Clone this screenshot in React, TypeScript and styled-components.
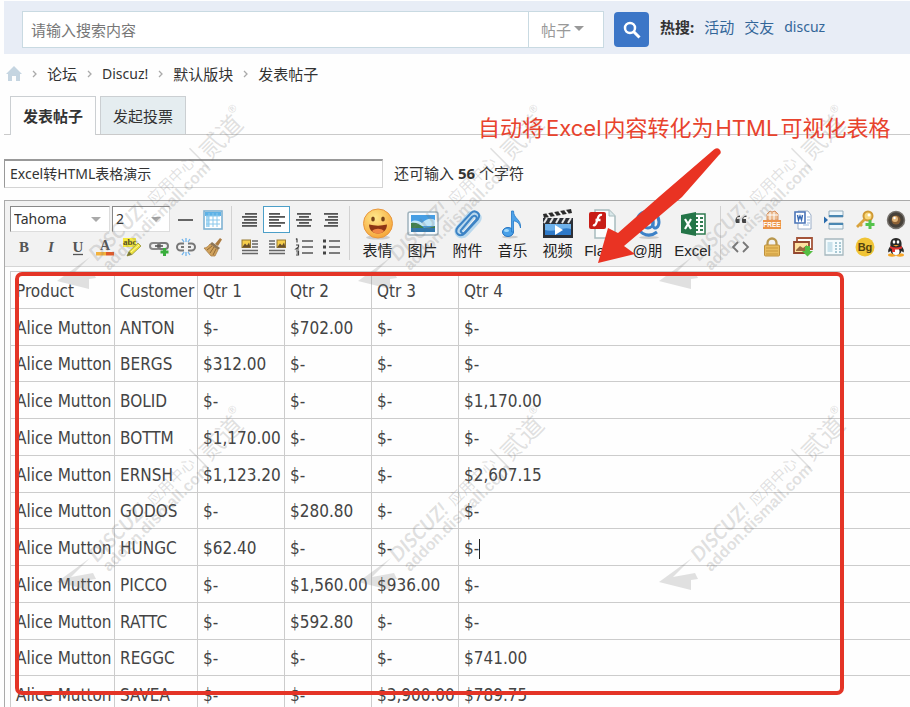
import React from "react";
import styled, { createGlobalStyle, css } from "styled-components";

const uiFont = `"Noto Sans", "Noto Sans CJK SC", sans-serif`;
const tahomaLike = `Tahoma, "DejaVu Sans Condensed", "Noto Sans CJK SC", sans-serif`;

const GlobalStyle = createGlobalStyle`
  *, *::before, *::after { box-sizing: border-box; }
  body { margin: 0; background: #fefefe; color: #333; font: 15px/20px ${uiFont}; }
  button, input, select { font: inherit; color: inherit; margin: 0; }
`;

const Page = styled.div`
  position: relative;
  display: flex;
  flex-direction: column;
  height: 100vh;
  padding: 1px 0 0 4px;
  overflow: hidden;
`;

/* ---------- search header ---------- */
const Header = styled.header`
  display: flex;
  align-items: flex-start;
  flex: none;
  height: 53px;
  padding: 10px 18px;
  background: #e8edf6;
`;
const SearchForm = styled.form`
  display: flex;
  flex: 0 1 627px;
  align-items: center;
`;
const SearchInput = styled.input`
  flex: 1;
  min-width: 0;
  height: 37px;
  padding: 0 8px;
  border: 1px solid #c9dae2;
  background: #fff;
  outline: 0;
  &::placeholder { color: #777; opacity: 1; }
`;
const ScopeWrap = styled.div`
  position: relative;
  width: 76px;
  height: 37px;
  margin: 0 10px 0 -1px;
`;
const ScopeSelect = styled.select`
  width: 100%;
  height: 100%;
  padding: 0 12px;
  border: 1px solid #c9dae2;
  border-radius: 0;
  background: #fff;
  color: #999;
  appearance: none;
`;
const ScopeArrow = styled.svg`
  position: absolute;
  right: 20px;
  top: 15px;
  pointer-events: none;
`;
const SearchButton = styled.button`
  display: flex;
  align-items: center;
  justify-content: center;
  width: 35px;
  height: 35px;
  padding: 0;
  border: 0;
  border-radius: 4px;
  background: #3c76c7;
`;
const HotLinks = styled.nav`
  display: flex;
  gap: 10px;
  margin: 6px 0 0 11px;
  white-space: nowrap;
`;
const HotLink = styled.a<{ $latin?: boolean }>`
  color: #336699;
  font-size: ${(p) => (p.$latin ? 14 : 15)}px;
  text-decoration: none;
`;

/* ---------- breadcrumb, tabs, title ---------- */
const Crumbs = styled.nav`
  display: flex;
  align-items: center;
  gap: 8px;
  flex: none;
  height: 42px;
  padding: 0 0 2px 2px;
`;
const CrumbLink = styled.a<{ $latin?: boolean }>`
  display: flex;
  color: #333;
  font-size: ${(p) => (p.$latin ? 14 : 15)}px;
  text-decoration: none;
`;
const Tabs = styled.div`
  display: flex;
  gap: 4px;
  flex: none;
  height: 39px;
  padding-left: 6px;
  border-bottom: 1px solid #cacaca;
`;
const Tab = styled.button<{ $active?: boolean }>`
  width: 86px;
  height: ${(p) => (p.$active ? 39 : 38)}px;
  padding: 0;
  border: 1px solid #cbcfd2;
  border-bottom: 0;
  background: ${(p) => (p.$active ? "#fefefe" : "#e5edf0")};
  font-weight: ${(p) => (p.$active ? 700 : 400)};
`;
const TitleRow = styled.div`
  display: flex;
  align-items: center;
  gap: 11px;
  flex: none;
  margin: 24px 0 12px;
`;
const TitleInput = styled.input`
  width: 379px;
  height: 29px;
  padding: 0 5px 3px;
  border: 1px solid #d4d4d4;
  border-top: 2px solid #999;
  border-left-color: #999;
  background: #fff;
  font-size: 14px;
  outline: 0;
`;
const Counter = styled.span`
  padding-bottom: 2px;
`;

/* ---------- editor ---------- */
const Editor = styled.section`
  display: flex;
  flex-direction: column;
  flex: 1;
  min-height: 0;
  border: 1px solid #aaa;
  border-width: 1px 0 0 1px;
`;
const Toolbar = styled.div`
  display: flex;
  flex: none;
  height: 66px;
  padding: 5px 0 0 5px;
  border-bottom: 1px solid #d5d5d5;
  background: #f2f2f2;
`;
const Group = styled.div<{ $cell: number; $columns: number }>`
  display: grid;
  grid-template-columns: repeat(${(p) => p.$columns}, ${(p) => p.$cell}px);
  grid-template-rows: 27px 27px;
`;
const Divider = styled.div`
  width: 1px;
  height: 54px;
  margin: 0 4px 0 5px;
  flex: none;
  background: #d2d2d2;
`;
const FontRow = styled.div`
  display: flex;
  gap: 2px;
  grid-column: span 6;
`;
const FontBox = styled.div<{ $width: number }>`
  position: relative;
  width: ${(p) => p.$width}px;
  height: 26px;
`;
const FontSelect = styled.select`
  width: 100%;
  height: 100%;
  padding: 0 3px;
  border: 1px solid #ddd;
  border-top-color: #888;
  border-left-color: #888;
  border-radius: 0;
  background: #fff;
  font-size: 14px;
  appearance: none;
`;
const FontArrow = styled.svg`
  position: absolute;
  right: 9px;
  top: 11px;
  pointer-events: none;
`;
const IconButton = styled.button<{ $active?: boolean }>`
  display: flex;
  align-items: center;
  justify-content: center;
  height: 27px;
  padding: 0;
  border: 1px solid transparent;
  background: none;
  ${(p) => p.$active && css`border-color: #4c9fc8; background: #fff;`}
`;
const BigButtons = styled.div`
  display: flex;
  padding-left: 1px;
`;
const BigButton = styled.button`
  display: flex;
  flex-direction: column;
  align-items: center;
  width: 45px;
  height: 56px;
  padding: 2px 0 0;
  border: 0;
  background: none;
  white-space: nowrap;
  line-height: 22px;
  color: #222;
  font-family: "Liberation Sans", "Noto Sans CJK SC", sans-serif;
`;
const Content = styled.div`
  flex: 1;
  min-height: 0;
  padding: 4px 0 0 5px;
  background: #fefefe;
  overflow: hidden;
`;
const DataTable = styled.table`
  width: calc(100% + 1px);
  height: 442px;
  border-collapse: collapse;
  table-layout: fixed;
  color: #444;
  font: 17px/24px ${tahomaLike};
`;
const Col = styled.col<{ $width?: number }>`
  ${(p) => p.$width && css`width: ${p.$width}px;`}
`;
const cell = css`
  padding: 2px 5px 0;
  border: 1px solid #ccc;
  font-weight: 400;
  text-align: left;
  white-space: nowrap;
`;
const Th = styled.th`${cell}`;
const Td = styled.td`${cell}`;
const Caret = styled.span`
  display: inline-block;
  width: 1px;
  height: 20px;
  background: #222;
  vertical-align: middle;
`;

/* ---------- annotations over the page ---------- */
const Overlay = styled.svg`
  position: absolute;
  left: 0;
  top: 0;
  pointer-events: none;
`;
const Highlight = styled.div`
  position: absolute;
  left: 15px;
  top: 272px;
  width: 829px;
  height: 423px;
  border: 4px solid #e43426;
  border-radius: 7px;
  pointer-events: none;
`;
const Note = styled.p`
  position: absolute;
  left: 478px;
  top: 112px;
  margin: 0;
  color: #e8432d;
  font: 22px/32px Inter, "Noto Sans CJK SC", sans-serif;
  white-space: nowrap;
`;
const NoteLatin = styled.span`
  margin: 0 2px;
`;

/* ---------- icons ---------- */
const Svg = ({ s = 20, children }: { s?: number; children: React.ReactNode }) => (
  <svg width={s} height={s} viewBox={`0 0 ${s} ${s}`} fill="none" aria-hidden="true">{children}</svg>
);

const Lines = ({ rows }: { rows: [number, number][] }) => (
  <Svg>
    {rows.map(([x, w], i) => (
      <rect key={i} x={x} y={3 + i * 3} width={w} height="1.8" fill="#555" />
    ))}
  </Svg>
);

const Letter = ({ t, i, u }: { t: string; i?: boolean; u?: boolean }) => (
  <Svg>
    <text x="10" y="15" textAnchor="middle" fontFamily="Liberation Serif, serif" fontSize="15" fontWeight="700"
      fontStyle={i ? "italic" : "normal"} fill="#555">{t}</text>
    {u && <path d="M5 17.500h10" stroke="#555" strokeWidth="1.300" />}
  </Svg>
);

const FloatIcon = ({ right }: { right?: boolean }) => {
  const px = right ? 10 : 2;
  const lx = right ? 2 : 12;
  return (
    <Svg>
      <path d={`M${lx} 4h6M${lx} 7h6M${lx} 10h6M2 13.500h16M2 16.500h16`} stroke="#666" strokeWidth="1.600" />
      <rect x={px} y="3" width="8.500" height="7.500" fill="#f7cf4c" stroke="#987a31" />
      <path d={`M${px} 10.500l3-4 2 2 2-3 1.500 5z`} fill="#68502d" />
    </Svg>
  );
};

const ListIcon = ({ ordered }: { ordered?: boolean }) => (
  <Svg>
    <path d="M8 4h11M8 10h11M8 16h11" stroke="#555" strokeWidth="1.500" />
    {ordered ? (
      <path d="M3 1.500v4M2 2.500l1-1M2 8h2.500v2L2 12h3M2 14h2.500v4H2M2.500 16h2" stroke="#444" strokeWidth="1.200" />
    ) : (
      <path d="M2 2.500h3v3H2zM2 8.500h3v3H2zM2 14.500h3v3H2z" fill="#444" />
    )}
  </Svg>
);

const fontIcons: [string, React.ReactNode][] = [
  ["分隔线", <Svg key="0"><path d="M2 10h15" stroke="#555" strokeWidth="1.800" /></Svg>],
  ["表格", (
    <Svg key="1">
      <rect x="1" y="1" width="18" height="18" fill="#fff" stroke="#7fb2d3" strokeWidth="1.600" />
      <path d="M2 2h16v4H2z" fill="#5eb2e6" />
      <path d="M3 6h3v11H3z" fill="#a9d9f4" />
      <path d="M6 3v14M10 3v14M14 3v14M3 6h14M3 10h14M3 14h14" stroke="#8ac8ec" />
    </Svg>
  )],
  ["粗体", <Letter key="2" t="B" />],
  ["斜体", <Letter key="3" t="I" i />],
  ["下划线", <Letter key="4" t="U" u />],
  ["文字颜色", (
    <Svg key="5">
      <text x="10" y="13" textAnchor="middle" fontFamily="Liberation Serif, serif" fontSize="14" fontWeight="700" fill="#555">A</text>
      <rect x="1" y="15" width="10" height="3.500" fill="#f2b13d" />
      <rect x="11" y="15" width="8" height="3.500" fill="#de5b2a" />
    </Svg>
  )],
  ["背景色", (
    <Svg key="6">
      <path d="M1 1h13v9H1z" fill="#f5e93f" />
      <text x="1" y="8" fontFamily="Liberation Serif, serif" fontSize="9" fontWeight="700" fill="#554d16">abc</text>
      <path d="M7 14.500L16 6l3 3-9 8.500-5 1.500z" fill="#ece13b" stroke="#99963a" strokeWidth=".800" />
      <path d="M5 19l2-4.500 3 3z" fill="#77753d" />
      <path d="M9 15l8-7" stroke="#fff9a4" />
    </Svg>
  )],
  ["链接", (
    <Svg key="7">
      <rect x="1" y="6" width="10" height="6" rx="3" stroke="#888" strokeWidth="2" />
      <rect x="9" y="6" width="10" height="6" rx="3" stroke="#777" strokeWidth="2" />
      <path d="M6 9h8" stroke="#555" strokeWidth="1.600" />
      <path d="M15.500 11v8M11.500 15h8" stroke="#39ae3c" strokeWidth="3" />
    </Svg>
  )],
  ["移除链接", (
    <Svg key="8">
      <path d="M8 6.500H4.500a3.500 3.500 0 000 7H8M12 6.500h3.500a3.500 3.500 0 010 7H12M5 10h3M12 10h3" stroke="#777" strokeWidth="2" />
      <path d="M10 1v4M6 2l2 3M14 2l-2 3M10 15v4M6 18l2-3M14 18l-2-3" stroke="#6eb3ec" strokeWidth="1.300" />
    </Svg>
  )],
  ["清除格式", (
    <Svg key="9">
      <path d="M12 7l5-6 2 1.500L15 9z" fill="#ac7c42" />
      <path d="M9 5l8 6-2 2-8-6z" fill="#8d7657" />
      <path d="M7 7l8 6-3 6H8L1 11c3 0 4-2 6-4z" fill="#d1a35d" stroke="#a27742" strokeWidth=".700" />
      <path d="M9 9l-5 4M11 10l-4 6M13 12l-3 6" stroke="#916937" />
    </Svg>
  )],
];

const alignIcons: [string, React.ReactNode, boolean?][] = [
  ["自动排版", <Lines key="0" rows={[[5, 12], [2, 15], [4, 13], [2, 15], [2, 15]]} />],
  ["居左", <Lines key="1" rows={[[2, 11], [2, 16], [2, 10], [2, 16], [2, 12]]} />, true],
  ["居中", <Lines key="2" rows={[[3, 14], [5, 10], [2, 16], [5, 10], [3, 14]]} />],
  ["居右", <Lines key="3" rows={[[3, 14], [7, 10], [4, 13], [7, 10], [3, 14]]} />],
  ["左浮动", <FloatIcon key="4" />],
  ["右浮动", <FloatIcon key="5" right />],
  ["排序列表", <ListIcon key="6" ordered />],
  ["未排序列表", <ListIcon key="7" />],
];

const bigIcons: [string, React.ReactNode][] = [
  ["表情", (
    <Svg key="0" s={32}>
      <ellipse cx="16" cy="29.500" rx="12" ry="2" fill="#ccc" />
      <circle cx="16" cy="15.500" r="14.500" fill="url(#face)" stroke="#e8973e" />
      <ellipse cx="11" cy="11" rx="1.800" ry="2.500" fill="#774318" />
      <ellipse cx="21" cy="11" rx="1.800" ry="2.500" fill="#774318" />
      <path d="M7 16.500c6 1.500 12 1.500 18 0 0 12-18 12-18 0z" fill="#8d3514" />
      <path d="M10 23c3-3 9-3 12 0-3 3.500-9 3.500-12 0z" fill="#f18745" />
    </Svg>
  )],
  ["图片", (
    <Svg key="1" s={32}>
      <rect x="1" y="4" width="30" height="23" rx="2" fill="#f6fbff" stroke="#a0b3bd" strokeWidth="1.500" />
      <path d="M4 7h24v17H4z" fill="#469ee4" />
      <path d="M4 14c4-3 8-1 11 1 5-5 9-5 13-3v6H4z" fill="#bfe5f8" />
      <path d="M4 15c5-1 9 1 13 5 4 0 8-1 11-2v3H4z" fill="#41804c" />
      <path d="M4 20h24v4H4z" fill="#3278ad" />
    </Svg>
  )],
  ["附件", (
    <Svg key="2" s={32}>
      <path d="M9 22L21 8c4-4 8 1 5 5L14 26c-5 5-12-1-8-6L18 6" stroke="#b9d8ed" strokeWidth="5" strokeLinecap="round" />
      <path d="M10 21l10-12c3-3 6 0 4 3L13 24c-2 3-5 0-4-2M13 25L26 11c4-5-3-10-7-6L6 19c-5 6 2 11 7 6z" stroke="#3c83c5" strokeWidth="2" strokeLinecap="round" />
    </Svg>
  )],
  ["音乐", (
    <Svg key="3" s={32}>
      <ellipse cx="13" cy="29" rx="8" ry="1.500" fill="#ccc" />
      <ellipse cx="11" cy="24" rx="5.500" ry="4.500" fill="#48a0e8" stroke="#2874c0" />
      <path d="M14.500 24V3h2c0 8 8 8 7 17-1-5-4-7-7-7v11z" fill="#4ea2e9" stroke="#2678c5" strokeWidth=".800" />
      <ellipse cx="9.500" cy="22.500" rx="2.500" ry="1.500" fill="#a3d9fa" />
    </Svg>
  )],
  ["视频", (
    <Svg key="4" s={32}>
      <path d="M1 6l28-5 1 4L2 10z" fill="#2a2a2a" />
      <path d="M5 5l3 4M11 4l3 4M17 3l3 4M23 2l3 4" stroke="#eee" strokeWidth="2" />
      <path d="M1 10h30v20H1z" fill="#2c3037" />
      <path d="M5 10l-3 5M11 10l-3 5M17 10l-3 5M23 10l-3 5M29 10l-3 5" stroke="#e7e7e7" strokeWidth="2" />
      <path d="M3 16h26v11H3z" fill="#2e79c8" />
      <path d="M3 16h26v5c-8-3-17 4-26 1z" fill="#6eb2ec" />
      <path d="M13 17l8 5-8 5z" fill="#fff" />
    </Svg>
  )],
  ["Flash", (
    <Svg key="5" s={32}>
      <path d="M8 2h14l6 6v22H8z" fill="#fbfdfd" stroke="#a8bcbe" strokeWidth="1.500" />
      <path d="M22 2v6h6" fill="#d9e7e9" stroke="#a8bcbe" />
      <rect x="2" y="4" width="17" height="17" rx="2" fill="#c81d17" />
      <path d="M15 7c-4-1-4 3-5 6s-2 5-4 4M8.500 12h5" stroke="#fff" strokeWidth="2.300" />
    </Svg>
  )],
  ["@朋", (
    <Svg key="6" s={32}>
      <ellipse cx="17" cy="29.500" rx="10" ry="1.500" fill="#ccc" />
      <circle cx="16" cy="15" r="5" stroke="#3d82c8" strokeWidth="3" />
      <path d="M21 10v8c1 4 6 2 6-4C27 1 8-1 5 12c-2 13 11 19 20 12" stroke="#3d82c8" strokeWidth="3" />
    </Svg>
  )],
  ["Excel", (
    <Svg key="7" s={32}>
      <path d="M15 6h13v20H15z" fill="#fff" stroke="#2f7b50" strokeWidth="1.500" />
      <path d="M18 10h3M18 14h3M18 18h3M18 22h3M23 10h3M23 14h3M23 18h3M23 22h3" stroke="#2f7b50" strokeWidth="2" />
      <path d="M4 7l15-3v24L4 25z" fill="#247548" />
      <path d="M8 11l6 10M14 11L8 21" stroke="#fff" strokeWidth="2.200" />
    </Svg>
  )],
];

const extraIcons: [string, React.ReactNode][] = [
  ["引用", <Svg key="0"><path d="M9 7H7.500C6 7 5.500 8 6 9h2.500v4H5C3.500 10 5 6 9 5.500zM15.500 7H14c-1.500 0-2 1-1.500 2H15v4h-3.500C10 10 11.500 6 15.500 5.500z" fill="#444" /></Svg>],
  ["免费信息", (
    <Svg key="1">
      <path d="M5 10V4l3-3 2 1 3-1 3 3v6z" fill="#edbd91" stroke="#d79363" />
      <path d="M5 5h11M8 2v8M12 2v8" stroke="#fff" />
      <path d="M1 10h18v9H1z" fill="#ec9349" />
      <text x="10" y="17" textAnchor="middle" fontFamily="Liberation Sans, sans-serif" fontSize="6.500" fontWeight="700" fill="#fff">FREE</text>
    </Svg>
  )],
  ["Word", (
    <Svg key="2">
      <path d="M5 1h10l3 4v14H5z" fill="#fff" stroke="#9baec8" />
      <path d="M10 15h6M14 7h3M14 10h3M14 13h3" stroke="#9bb9dd" />
      <path d="M2 2h10v11H2z" fill="#fff" stroke="#4b75b8" strokeWidth="1.600" />
      <path d="M4.500 5l1 5 1.500-4 1.500 4 1-5" stroke="#3769b4" strokeWidth="1.400" />
    </Svg>
  )],
  ["分页", (
    <Svg key="3">
      <path d="M5 1h14v6H5zM5 13h14v6H5z" fill="#eef7fc" stroke="#93acbc" />
      <path d="M5 6h14M5 14h14" stroke="#4a87b2" strokeWidth="2" />
      <path d="M0 6.500l4 3.500-4 3.500z" fill="#2b6cad" />
    </Svg>
  )],
  ["密码", (
    <Svg key="4">
      <circle cx="13" cy="6" r="4.500" fill="#f8d87b" stroke="#cf9934" strokeWidth="2" />
      <circle cx="14" cy="5" r="1.500" fill="#fff" />
      <path d="M10 9l-8 8M5 14l2 2" stroke="#d9a33d" strokeWidth="2.800" />
      <path d="M15 10v9M10.500 14.500h9" stroke="#54c34c" strokeWidth="3" />
    </Svg>
  )],
  ["拍照", (
    <Svg key="5">
      <circle cx="10" cy="10" r="8.500" fill="#47413a" stroke="#77736e" strokeWidth="1.500" />
      <circle cx="10" cy="10" r="4.500" fill="#8d6034" />
      <circle cx="9" cy="9" r="3" fill="#e2b579" />
      <circle cx="8.500" cy="8" r="1.200" fill="#fff" />
    </Svg>
  )],
  ["代码", <Svg key="6"><path d="M7 5l-5 5 5 5M12 5l5 5-5 5" stroke="#777" strokeWidth="1.800" /></Svg>],
  ["隐藏内容", (
    <Svg key="7">
      <path d="M5.500 10V6a4.500 4.500 0 019 0v4" stroke="#b9984e" strokeWidth="2.300" />
      <rect x="2.500" y="8" width="15" height="11" rx="1" fill="#e8bc5e" stroke="#bf913c" />
      <path d="M4 11h12M4 14h12M4 17h12" stroke="#c9983c" />
    </Svg>
  )],
  ["下载图片", (
    <Svg key="8">
      <path d="M4 1h15v11H4z" fill="#fff" stroke="#a45439" strokeWidth="1.800" />
      <path d="M1 5h15v11H1z" fill="#ffe2a1" stroke="#93472f" strokeWidth="1.800" />
      <path d="M3 13l4-4 3 2 4-3v6H3z" fill="#99693e" />
      <path d="M12 9h5v5h3l-5.500 5.500L9 14h3z" fill="#55be43" />
    </Svg>
  )],
  ["目录", (
    <Svg key="9">
      <path d="M1 2h18v16H1z" fill="#f4fbfd" stroke="#a6b8bf" strokeWidth="1.300" />
      <path d="M3.500 5h5v10h-5z" fill="#c9e2ec" />
      <path d="M11 6h2M11 9h2M11 12h2M11 15h2M15 6h2M15 9h2M15 12h2M15 15h2" stroke="#8db8c6" strokeWidth="1.500" />
    </Svg>
  )],
  ["背景", (
    <Svg key="10">
      <circle cx="10" cy="10" r="9.500" fill="#f0c435" />
      <text x="10" y="14" textAnchor="middle" fontFamily="Liberation Sans, sans-serif" fontSize="11" fontWeight="700" fill="#54420f">Bg</text>
    </Svg>
  )],
  ["QQ", (
    <Svg key="11">
      <ellipse cx="6" cy="18" rx="4" ry="1.700" fill="#f5a526" />
      <ellipse cx="14" cy="18" rx="4" ry="1.700" fill="#f5a526" />
      <path d="M10 1c5 0 6 4 5.500 8 2 2 3 5 2 6.500L15.500 14c-1 5-10 5-11 0l-2 1.500c-1-1.500 0-4.500 2-6.500C4 5 5 1 10 1z" fill="#292929" />
      <ellipse cx="10" cy="14.500" rx="3.500" ry="3.500" fill="#fff" />
      <ellipse cx="8" cy="5" rx="1.300" ry="1.800" fill="#fff" />
      <ellipse cx="12" cy="5" rx="1.300" ry="1.800" fill="#fff" />
      <path d="M7 8h6l-3 1.500z" fill="#f5a526" />
      <path d="M4 9c4 2 8 2 12 0v2.500c-3 1-5 1-7 1V15H6v-3l-2-1z" fill="#df3431" />
    </Svg>
  )],
];

/* ---------- data ---------- */
const columns = ["Product", "Customer", "Qtr 1", "Qtr 2", "Qtr 3", "Qtr 4"];
const rows: string[][] = [
  ["ANTON", "$-", "$702.00", "$-", "$-"],
  ["BERGS", "$312.00", "$-", "$-", "$-"],
  ["BOLID", "$-", "$-", "$-", "$1,170.00"],
  ["BOTTM", "$1,170.00", "$-", "$-", "$-"],
  ["ERNSH", "$1,123.20", "$-", "$-", "$2,607.15"],
  ["GODOS", "$-", "$280.80", "$-", "$-"],
  ["HUNGC", "$62.40", "$-", "$-", "$-"],
  ["PICCO", "$-", "$1,560.00", "$936.00", "$-"],
  ["RATTC", "$-", "$592.80", "$-", "$-"],
  ["REGGC", "$-", "$-", "$-", "$741.00"],
  ["SAVEA", "$-", "$-", "$3,900.00", "$789.75"],
];

const Chevron = () => (
  <svg width="9" height="10" viewBox="0 0 9 10" fill="none" aria-hidden="true">
    <path d="M3 2l3 3-3 3" stroke="#aaa" strokeWidth="1.300" />
  </svg>
);

const Watermark = ({ x, y }: { x: number; y: number }) => (
  <g transform={`translate(${x} ${y})`} fill="#777" fillOpacity=".220">
    <path d="M0 0L33-24 14-5 36-9 39-3 32-2 32 8z" />
    <g transform="translate(40 -19) rotate(-45)">
      <text x="0" y="0" fontFamily="Lato, sans-serif" fontSize="20" fontStyle="italic" fontWeight="700">DISCUZ!</text>
      <text x="80" y="0" fontFamily="Noto Sans CJK SC, sans-serif" fontSize="15">应用中心</text>
      <path d="M145-15h1.500v27h-1.500z" />
      <text x="151" y="8" fontFamily="Noto Sans CJK SC, sans-serif" fontSize="25">贰道</text>
      <text x="200" y="-9" fontFamily="Liberation Sans, sans-serif" fontSize="11" fontWeight="700">®</text>
      <text x="2" y="15" fontFamily="Liberation Sans, sans-serif" fontSize="16" fontWeight="700">addon.dismall.com</text>
    </g>
  </g>
);

export default function App() {
  return (
    <Page>
      <GlobalStyle />
      <Header>
        <SearchForm onSubmit={(e) => e.preventDefault()}>
          <SearchInput aria-label="搜索" placeholder="请输入搜索内容" />
          <ScopeWrap>
            <ScopeSelect aria-label="搜索范围"><option>帖子</option></ScopeSelect>
            <ScopeArrow width="10" height="6" viewBox="0 0 10 6"><path d="M0 0h10L5 5z" fill="#999" /></ScopeArrow>
          </ScopeWrap>
          <SearchButton aria-label="搜索">
            <svg width="18" height="18" viewBox="0 0 18 18" fill="none" aria-hidden="true">
              <circle cx="7" cy="7" r="5" stroke="#fff" strokeWidth="2.500" />
              <path d="M10.500 10.500l6 6" stroke="#fff" strokeWidth="3" />
            </svg>
          </SearchButton>
        </SearchForm>
        <HotLinks>
          <strong>热搜:</strong>
          <HotLink href="#activity">活动</HotLink>
          <HotLink href="#friends">交友</HotLink>
          <HotLink href="#discuz" $latin>discuz</HotLink>
        </HotLinks>
      </Header>

      <Crumbs>
        <CrumbLink href="#home" aria-label="首页">
          <svg width="16" height="16" viewBox="0 0 16 16" aria-hidden="true">
            <path d="M8 0l8 8h-2v7h-4v-5H6v5H2V8H0z" fill="#c5d5e1" />
          </svg>
        </CrumbLink>
        <Chevron />
        <CrumbLink href="#forum">论坛</CrumbLink>
        <Chevron />
        <CrumbLink href="#discuz-forum" $latin>Discuz!</CrumbLink>
        <Chevron />
        <CrumbLink href="#default">默认版块</CrumbLink>
        <Chevron />
        <span>发表帖子</span>
      </Crumbs>

      <Tabs role="tablist">
        <Tab role="tab" aria-selected="true" $active>发表帖子</Tab>
        <Tab role="tab" aria-selected="false">发起投票</Tab>
      </Tabs>

      <TitleRow>
        <TitleInput aria-label="标题" defaultValue="Excel转HTML表格演示" />
        <Counter>还可输入 <strong>56</strong> 个字符</Counter>
      </TitleRow>

      <Editor>
        <Toolbar role="toolbar">
          <Group $cell={27} $columns={8}>
            <FontRow>
              <FontBox $width={100}>
                <FontSelect aria-label="字体"><option>Tahoma</option></FontSelect>
                <FontArrow width="10" height="6" viewBox="0 0 10 6"><path d="M0 0h10L5 5z" fill="#aaa" /></FontArrow>
              </FontBox>
              <FontBox $width={58}>
                <FontSelect aria-label="字号"><option>2</option></FontSelect>
                <FontArrow width="10" height="6" viewBox="0 0 10 6"><path d="M0 0h10L5 5z" fill="#aaa" /></FontArrow>
              </FontBox>
            </FontRow>
            {fontIcons.map(([label, icon]) => <IconButton key={label} aria-label={label}>{icon}</IconButton>)}
          </Group>
          <Divider />
          <Group $cell={27} $columns={4}>
            {alignIcons.map(([label, icon, active]) => (
              <IconButton key={label} aria-label={label} $active={active}>{icon}</IconButton>
            ))}
          </Group>
          <Divider />
          <BigButtons>
            {bigIcons.map(([label, icon]) => <BigButton key={label}>{icon}{label}</BigButton>)}
          </BigButtons>
          <Divider />
          <Group $cell={31} $columns={6}>
            {extraIcons.map(([label, icon]) => <IconButton key={label} aria-label={label}>{icon}</IconButton>)}
          </Group>
        </Toolbar>
        <Content>
          <DataTable>
            <colgroup>
              <Col $width={104} /><Col $width={83} /><Col $width={87} /><Col $width={87} /><Col $width={87} /><Col />
            </colgroup>
            <tbody>
              <tr>{columns.map((c) => <Th key={c} scope="col">{c}</Th>)}</tr>
              {rows.map((r) => (
                <tr key={r[0]}>
                  <Td>Alice Mutton</Td>
                  {r.map((v, i) => (
                    <Td key={i}>{v}{r[0] === "HUNGC" && i === 4 && <Caret />}</Td>
                  ))}
                </tr>
              ))}
            </tbody>
          </DataTable>
        </Content>
      </Editor>

      <Overlay width="910" height="707" viewBox="0 0 910 707" aria-hidden="true">
        <defs>
          <radialGradient id="face" cx=".4" cy=".3" r=".7">
            <stop offset="0" stopColor="#ffe88a" />
            <stop offset="1" stopColor="#f6a83c" />
          </radialGradient>
        </defs>
        {[281, 582].map((y) => [57, 358, 659].map((x) => <Watermark key={`${x}-${y}`} x={x} y={y} />))}
      </Overlay>
      <Highlight />
      <Note>自动将<NoteLatin>Excel</NoteLatin>内容转化为<NoteLatin>HTML</NoteLatin>可视化表格</Note>
      <Overlay width="910" height="707" viewBox="0 0 910 707" aria-hidden="true">
        <path d="M598 263L608 228 618 233 660 196 714 149.500Q718 147 720 150T719 155L682 197 624 246 635 254z" fill="#e93323" />
      </Overlay>
    </Page>
  );
}
